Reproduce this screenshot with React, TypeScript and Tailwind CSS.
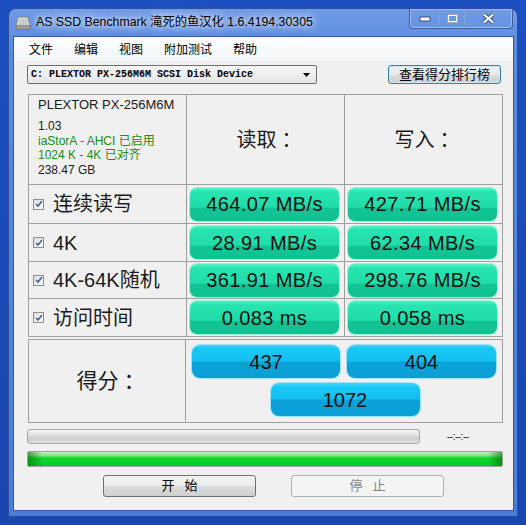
const cjk = "font-['Liberation_Sans','Noto_Sans_CJK_SC',sans-serif]";

const Colon = () => <span className="font-['Noto_Sans_CJK_TC',sans-serif]">：</span>;

const CheckBox = () => (
  <div className="w-[11px] h-[11px] border border-[#8e8f8f] bg-[linear-gradient(135deg,#dcdcdc,#ffffff)] flex items-center justify-center">
    <svg width="8" height="8" viewBox="0 0 8 8">
      <path d="M1 4 L3 6 L7 1" fill="none" stroke="#4a5f97" strokeWidth="1.6" />
    </svg>
  </div>
);

const GreenBox = ({ value }: { value: string }) => (
  <div className="ml-[3px] w-[149px] h-[33px] rounded-[7px] shadow-[0_0_0_1px_#9df3d6] bg-[linear-gradient(to_bottom,#52f3c7_0%,#27e4b0_12%,#1fdca8_58%,#12c495_62%,#10c190_100%)] flex items-center justify-center text-[20px] text-[#101010] font-['Liberation_Sans',sans-serif] tracking-[0.4px]">
    {value}
  </div>
);

const BlueBox = ({ value, w = 'w-[149px]' }: { value: string; w?: string }) => (
  <div className={`${w} h-[33px] rounded-[8px] shadow-[0_0_0_1px_#9fe3fa] bg-[linear-gradient(to_bottom,#43d6fb_0%,#1ac7f4_12%,#13bff0_48%,#0aa2d8_52%,#0b9fd6_100%)] flex items-center justify-center text-[20px] text-[#101010] font-['Liberation_Sans',sans-serif]`}>
    {value}
  </div>
);

const rows = [
  { label: '连续读写', read: '464.07 MB/s', write: '427.71 MB/s', h: 'h-[39px]' },
  { label: '4K', read: '28.91 MB/s', write: '62.34 MB/s', h: 'h-[38px]' },
  { label: '4K-64K随机', read: '361.91 MB/s', write: '298.76 MB/s', h: 'h-[37px]' },
  { label: '访问时间', read: '0.083 ms', write: '0.058 ms', h: 'h-[38px]' },
];

export default function App() {
  return (
    <div className="w-[526px] h-[525px] overflow-hidden bg-[linear-gradient(to_bottom,#1d4fc0,#1a46b0)] pt-[8px] pl-[8px]">
      {/* Window frame */}
      <div className="w-[510px] h-[509px] rounded-t-[8px] border border-[#2a4f9c] bg-[linear-gradient(to_bottom,#6f9be6_0%,#5a89dd_8%,#4c7cd6_100%)] flex flex-col">
        {/* Title bar */}
        <div className="h-[27px] flex items-start justify-between">
          <div className="flex items-center h-[27px] pl-[6px] gap-[5px]">
            <svg width="16" height="14" viewBox="0 0 16 14">
              <path d="M3 1 H13 L15 10 H1 Z" fill="#d8d8d8" stroke="#8a8a8a" />
              <rect x="1" y="10" width="14" height="3" fill="#a8a8a8" stroke="#7a7a7a" />
              <path d="M5 3 V9 M8 3 V9 M11 3 V9" stroke="#b0b0b0" />
            </svg>
            <span className={`${cjk} text-[12.3px] text-black [text-shadow:0_0_6px_#ffffff,0_0_10px_#ffffff]`}>
              AS SSD Benchmark 滝死的鱼汉化 1.6.4194.30305
            </span>
          </div>
          <div className="mr-[4px] flex h-[20px] border border-t-0 border-[#3c5f9c] rounded-b-[4px] overflow-hidden shadow-[inset_0_0_0_1px_#9fbbea]">
            <div className="w-[30px] flex items-center justify-center border-r border-[#7e9fd8]">
              <svg width="12" height="6" viewBox="0 0 12 6"><rect x="1" y="1" width="10" height="4" fill="#ffffff" stroke="#3a4f7a" /></svg>
            </div>
            <div className="w-[25px] flex items-center justify-center border-r border-[#7e9fd8]">
              <svg width="11" height="9" viewBox="0 0 11 9"><rect x="1" y="1" width="9" height="7" fill="none" stroke="#ffffff" strokeWidth="2" /><rect x="0.5" y="0.5" width="10" height="8" fill="none" stroke="#3a4f7a" strokeWidth="0.5" /></svg>
            </div>
            <div className="w-[47px] flex items-center justify-center">
              <svg width="13" height="11" viewBox="0 0 13 11"><path d="M2 1.5 L11 9.5 M11 1.5 L2 9.5" stroke="#3a4f7a" strokeWidth="4" /><path d="M2 1.5 L11 9.5 M11 1.5 L2 9.5" stroke="#ffffff" strokeWidth="2.2" /></svg>
            </div>
          </div>
        </div>

        {/* Client area */}
        <div className="ml-[4px] w-[501px] h-[475px] border border-[#35589e] bg-[#f0f0f0] flex flex-col">
          {/* Menu */}
          <div className={`h-[24px] flex items-center gap-[21px] pl-[15px] pt-[2px] text-[12px] text-black bg-[linear-gradient(to_bottom,#ffffff,#f4f6f9)] ${cjk}`}>
            <span>文件</span>
            <span>编辑</span>
            <span>视图</span>
            <span>附加测试</span>
            <span>帮助</span>
          </div>

          <div className="pl-[13px] flex flex-col">
            {/* Drive + ranking */}
            <div className="mt-[4px] h-[19px] flex items-center">
              <div className="w-[290px] h-[19px] border border-[#707070] rounded-[2px] bg-[linear-gradient(to_bottom,#f6f6f6,#e6e6e6)] flex items-center justify-between pl-[3px] pr-[6px]">
                <span className="font-['Liberation_Mono',monospace] text-[10px] font-bold text-black">C: PLEXTOR PX-256M6M SCSI Disk Device</span>
                <svg width="7" height="4" viewBox="0 0 7 4"><path d="M0 0 H7 L3.5 4 Z" fill="#000" /></svg>
              </div>
              <div className={`ml-[71px] w-[113px] h-[19px] border border-[#3c7fb1] rounded-[3px] bg-[linear-gradient(to_bottom,#f2f2f2_0%,#ebebeb_50%,#dddddd_51%,#cfcfcf_100%)] shadow-[inset_0_0_0_1px_#c7e6f8] flex items-center justify-center text-[13px] text-black ${cjk}`}>
                查看得分排行榜
              </div>
            </div>

            {/* Results table */}
            <div className="mt-[10px] ml-[1px] w-[475px] border-l border-t border-[#a0a0a0] grid grid-cols-[158px_158px_158px]">
              <div className={`h-[90px] border-r border-b border-[#a0a0a0] pl-[9px] pt-[2px] ${cjk}`}>
                <div className="text-[13px] leading-[16px] text-[#1a1a1a]">PLEXTOR PX-256M6M</div>
                <div className="mt-[6px] text-[12px] leading-[14.5px]">
                  <div className="text-[#1a1a1a]">1.03</div>
                  <div className="text-[#218a21]">iaStorA - AHCI 已启用</div>
                  <div className="text-[#218a21]">1024 K - 4K 已对齐</div>
                  <div className="text-[#1a1a1a]">238.47 GB</div>
                </div>
              </div>
              <div className={`h-[90px] border-r border-b border-[#a0a0a0] flex items-center justify-center pl-[2px] text-[20px] text-[#1a1a1a] ${cjk}`}>读取<Colon /></div>
              <div className={`h-[90px] border-r border-b border-[#a0a0a0] flex items-center justify-center pl-[2px] text-[20px] text-[#1a1a1a] ${cjk}`}>写入<Colon /></div>

              {rows.map((r) => (
                <div key={r.label} className="contents">
                  <div className={`${r.h} border-r border-b border-[#a0a0a0] flex items-center pl-[4px] gap-[9px]`}>
                    <CheckBox />
                    <span className={`text-[20px] text-[#1a1a1a] ${cjk}`}>{r.label}</span>
                  </div>
                  <div className={`${r.h} border-r border-b border-[#a0a0a0] flex items-center`}>
                    <GreenBox value={r.read} />
                  </div>
                  <div className={`${r.h} border-r border-b border-[#a0a0a0] flex items-center`}>
                    <GreenBox value={r.write} />
                  </div>
                </div>
              ))}
            </div>

            {/* Score */}
            <div className="mt-[2px] ml-[1px] w-[475px] h-[84px] border border-[#a0a0a0] grid grid-cols-[157px_316px]">
              <div className={`border-r border-[#a0a0a0] flex items-center justify-center pl-[2px] text-[21px] text-[#1a1a1a] ${cjk}`}>得分<Colon /></div>
              <div className="flex flex-col pt-[5px]">
                <div className="flex gap-[7px] pl-[6px]">
                  <BlueBox value="437" w="w-[148px]" />
                  <BlueBox value="404" />
                </div>
                <div className="mt-[5px] flex justify-center pl-[2px]">
                  <BlueBox value="1072" />
                </div>
              </div>
            </div>

            {/* Progress */}
            <div className="mt-[6px] h-[15px] flex items-center">
              <div className="w-[393px] h-[15px] rounded-[3px] border border-[#a9a9a9] bg-[linear-gradient(to_bottom,#f3f3f3_0%,#e2e2e2_40%,#cfcfcf_60%,#dcdcdc_100%)]" />
              <span className="ml-[27px] text-[10px] text-[#1a1a1a] font-['Liberation_Sans',sans-serif] tracking-[-0.5px]">--:--:--</span>
            </div>
            <div className="mt-[7px] w-[476px] h-[16px] rounded-[2px] border border-[#a0a0a0] overflow-hidden bg-[linear-gradient(to_bottom,#c4f5c4_0%,#7ee87e_25%,#0fd42f_45%,#06cf26_100%)]">
              <div className="w-full h-full bg-[linear-gradient(to_right,rgba(0,90,0,0.55)_0%,rgba(0,90,0,0)_3%,rgba(0,90,0,0)_97%,rgba(0,90,0,0.55)_100%)]" />
            </div>

            {/* Buttons */}
            <div className="mt-[8px] flex pl-[76px] gap-[35px]">
              <div className={`w-[153px] h-[22px] border border-[#707070] rounded-[3px] bg-[linear-gradient(to_bottom,#f2f2f2_0%,#ebebeb_50%,#dddddd_51%,#cfcfcf_100%)] flex items-center justify-center text-[13px] text-black tracking-[10px] pl-[10px] ${cjk}`}>
                开始
              </div>
              <div className={`w-[153px] h-[22px] border border-[#adb2b5] rounded-[3px] bg-[#f4f4f4] flex items-center justify-center text-[13px] text-[#838383] tracking-[10px] pl-[10px] ${cjk}`}>
                停止
              </div>
            </div>
          </div>
        </div>
      </div>
    </div>
  );
}
